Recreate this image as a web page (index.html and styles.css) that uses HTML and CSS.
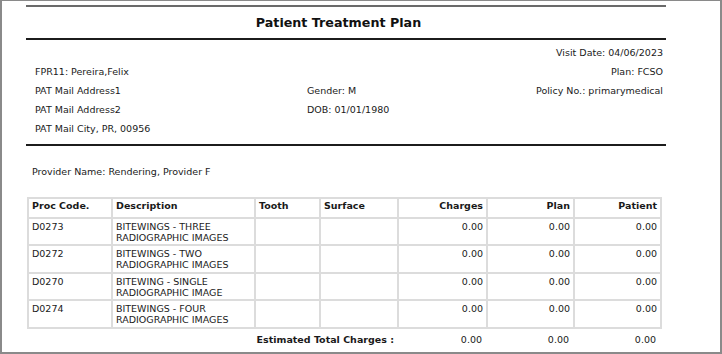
FILE: index.html
```html
<!DOCTYPE html>
<html>
<head>
<meta charset="utf-8">
<link rel="stylesheet" href="styles.css">
</head>
<body>
<div class="frame">
  <div class="page">
    <div class="rule rule-light"></div>
    <h1 class="title">Patient Treatment Plan</h1>
    <div class="rule"></div>
    <div class="info">
      <div class="col col-left">
        <div class="line"></div>
        <div class="line">FPR11: Pereira,Felix</div>
        <div class="line">PAT Mail Address1</div>
        <div class="line">PAT Mail Address2</div>
        <div class="line">PAT Mail City, PR, 00956</div>
      </div>
      <div class="col col-mid">
        <div class="line"></div>
        <div class="line"></div>
        <div class="line">Gender: M</div>
        <div class="line">DOB: 01/01/1980</div>
      </div>
      <div class="col col-right">
        <div class="line">Visit Date: 04/06/2023</div>
        <div class="line">Plan: FCSO</div>
        <div class="line">Policy No.: primarymedical</div>
      </div>
    </div>
    <div class="rule"></div>
    <div class="provider">Provider Name: Rendering, Provider F</div>
    <table class="procs">
      <colgroup>
        <col style="width:84px">
        <col style="width:143px">
        <col style="width:65px">
        <col style="width:78px">
        <col style="width:89px">
        <col style="width:87px">
        <col style="width:87px">
      </colgroup>
      <thead>
        <tr>
          <th>Proc Code.</th>
          <th>Description</th>
          <th>Tooth</th>
          <th>Surface</th>
          <th class="num">Charges</th>
          <th class="num">Plan</th>
          <th class="num">Patient</th>
        </tr>
      </thead>
      <tbody>
        <tr>
          <td>D0273</td>
          <td>BITEWINGS - THREE RADIOGRAPHIC IMAGES</td>
          <td></td>
          <td></td>
          <td class="num">0.00</td>
          <td class="num">0.00</td>
          <td class="num">0.00</td>
        </tr>
        <tr>
          <td>D0272</td>
          <td>BITEWINGS - TWO RADIOGRAPHIC IMAGES</td>
          <td></td>
          <td></td>
          <td class="num">0.00</td>
          <td class="num">0.00</td>
          <td class="num">0.00</td>
        </tr>
        <tr>
          <td>D0270</td>
          <td>BITEWING - SINGLE RADIOGRAPHIC IMAGE</td>
          <td></td>
          <td></td>
          <td class="num">0.00</td>
          <td class="num">0.00</td>
          <td class="num">0.00</td>
        </tr>
        <tr>
          <td>D0274</td>
          <td>BITEWINGS - FOUR RADIOGRAPHIC IMAGES</td>
          <td></td>
          <td></td>
          <td class="num">0.00</td>
          <td class="num">0.00</td>
          <td class="num">0.00</td>
        </tr>
        <tr class="total">
          <td colspan="4" class="num label">Estimated Total Charges :</td>
          <td class="num">0.00</td>
          <td class="num">0.00</td>
          <td class="num">0.00</td>
        </tr>
      </tbody>
    </table>
  </div>
</div>
</body>
</html>
```

FILE: styles.css
```css
html, body {
  margin: 0;
  padding: 0;
  background: #ffffff;
}

.frame {
  box-sizing: border-box;
  width: 722px;
  height: 354px;
  border-style: solid;
  border-color: #8a8a8a;
  border-width: 1px 2px 2px 2px;
  font-family: "DejaVu Sans", Verdana, sans-serif;
  font-size: 9.5px;
  color: #1a1a1a;
  overflow: hidden;
}

.page {
  width: 640px;
  margin-left: 24px;
  padding-top: 4px;
}

.rule {
  height: 2px;
  background: #1c1c1c;
}

.rule-light {
  background: #6a6a6a;
}

.title {
  margin: 0;
  height: 31px;
  line-height: 31px;
  padding-right: 15px;
  text-align: center;
  font-size: 12.7px;
  font-weight: bold;
  color: #111111;
}

.info {
  display: grid;
  grid-template-columns: 272px 1fr auto;
  padding: 2.5px 3px 6.5px 9px;
}

.col-right {
  text-align: right;
}

.line {
  height: 19px;
  line-height: 19px;
  white-space: nowrap;
}

.provider {
  margin-top: 15.5px;
  padding-left: 6px;
  line-height: 19px;
}

.procs {
  margin-top: 16.5px;
  margin-left: 1px;
  width: 632px;
  table-layout: fixed;
  border-collapse: collapse;
}

.procs th,
.procs td {
  border: 2px solid #dcdcdc;
  padding: 2px 3px 1.5px 3px;
  line-height: 11px;
  text-align: left;
  vertical-align: top;
  font-size: 9.5px;
}

.procs th {
  padding-top: 1px;
  padding-bottom: 5.5px;
  font-weight: bold;
}

.procs .num {
  text-align: right;
}

.procs .total td {
  border: none;
  padding-top: 5px;
  padding-right: 5px;
}

.procs .total .label {
  font-weight: bold;
  padding-right: 4px;
}
```
